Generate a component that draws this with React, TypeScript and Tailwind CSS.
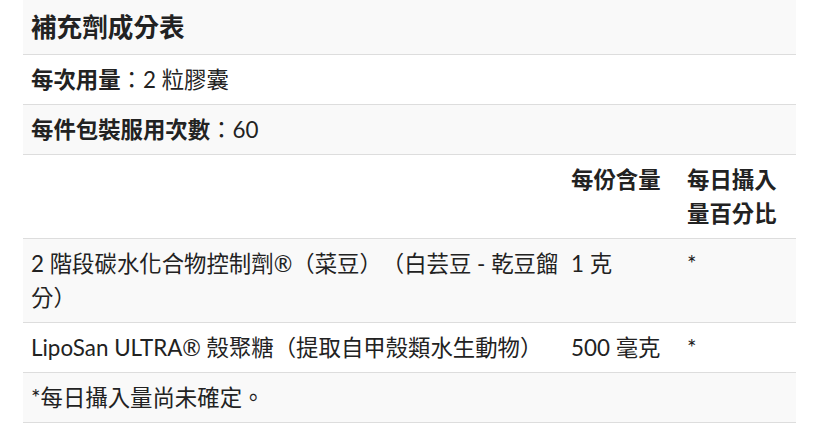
import React from "react";

function L({ children }: { children: React.ReactNode }) {
  return <span>{children}</span>;
}

export default function App() {
  return (
    <div className="w-[817px] h-[423px] bg-white overflow-hidden text-[#222] font-['Lato','Noto_Sans_CJK_TC',sans-serif] [text-spacing-trim:space-all]">
      <div className="ml-[23px] w-[773px]">
        <div className="bg-[#f9f9f9] border-b border-[#dddddd] px-2 py-[7.5px] text-[25.6px] leading-[39px] font-bold">
          補充劑成分表
        </div>
        <div className="bg-white border-b border-[#dddddd] px-2 py-[7.5px] text-[22.4px] leading-[34px]">
          <span className="font-bold">每次用量</span><L>：</L>2 <L>粒膠囊</L>
        </div>
        <div className="bg-[#f9f9f9] border-b border-[#dddddd] px-2 py-[7.5px] text-[22.4px] leading-[34px]">
          <span className="font-bold">每件包裝服用次數</span><L>：</L>60
        </div>
        <div className="grid grid-cols-[540px_116px_117px] bg-white border-b border-[#dddddd] text-[22.4px] leading-[34px] font-bold">
          <div className="px-2 py-[7.5px]"></div>
          <div className="px-2 py-[7.5px]">每份含量</div>
          <div className="px-2 py-[7.5px]">每日攝入<br />量百分比</div>
        </div>
        <div className="grid grid-cols-[540px_116px_117px] bg-[#f9f9f9] border-b border-[#dddddd] text-[22.4px] leading-[34px]">
          <div className="px-2 py-[7.5px] whitespace-nowrap">2 <L>階段碳水化合物控制劑</L>®<L>（菜豆）（白芸豆</L> - <L>乾豆餾</L><br /><L>分）</L></div>
          <div className="px-2 py-[7.5px]">1 <L>克</L></div>
          <div className="px-2 py-[7.5px]">*</div>
        </div>
        <div className="grid grid-cols-[540px_116px_117px] bg-white border-b border-[#dddddd] text-[22.4px] leading-[34px]">
          <div className="px-2 py-[7.5px] whitespace-nowrap">LipoSan ULTRA® <L>殼聚糖（提取自甲殼類水生動物）</L></div>
          <div className="px-2 py-[7.5px] whitespace-nowrap">500 <L>毫克</L></div>
          <div className="px-2 py-[7.5px]">*</div>
        </div>
        <div className="bg-[#f9f9f9] border-b border-[#dddddd] px-2 py-[7.5px] text-[22.4px] leading-[34px]">
          *<L>每日攝入量尚未確定。</L>
        </div>
      </div>
    </div>
  );
}
